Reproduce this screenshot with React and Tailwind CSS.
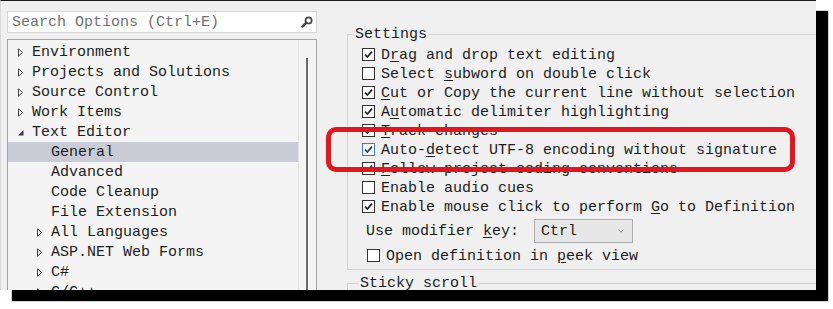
import clsx from "clsx"

const tree = [
  { label: "Environment", level: 0, arrow: "closed" },
  { label: "Projects and Solutions", level: 0, arrow: "closed" },
  { label: "Source Control", level: 0, arrow: "closed" },
  { label: "Work Items", level: 0, arrow: "closed" },
  { label: "Text Editor", level: 0, arrow: "open" },
  { label: "General", level: 1, selected: true },
  { label: "Advanced", level: 1 },
  { label: "Code Cleanup", level: 1 },
  { label: "File Extension", level: 1 },
  { label: "All Languages", level: 1, arrow: "closed" },
  { label: "ASP.NET Web Forms", level: 1, arrow: "closed" },
  { label: "C#", level: 1, arrow: "closed" },
  { label: "C/C++", level: 1, arrow: "closed" },
]

// "&" marks the access-key letter
const settings = [
  { text: "D&rag and drop text editing", checked: true },
  { text: "Select &subword on double click", checked: false },
  { text: "&Cut or Copy the current line without selection", checked: true },
  { text: "A&utomatic delimiter highlighting", checked: true },
  { text: "&Track changes", checked: true },
  { text: "Auto-&detect UTF-8 encoding without signature", checked: true, hover: true },
  { text: "&Follow project coding conventions", checked: true },
  { text: "Enable audio cues", checked: false },
  { text: "Enable mouse click to perform &Go to Definition", checked: true },
]

function Label({ text }) {
  const i = text.indexOf("&")
  if (i < 0) return <span>{text}</span>
  return (
    <span>
      {text.slice(0, i)}
      <span className="underline underline-offset-[2px] decoration-1">{text[i + 1]}</span>
      {text.slice(i + 2)}
    </span>
  )
}

function Arrow({ type }) {
  if (type === "open") {
    return (
      <svg width="6" height="7" viewBox="0 0 6 7">
        <path d="M5.5 1 L5.5 6.5 L0 6.5 Z" fill="#3c3c3c" />
      </svg>
    )
  }
  return (
    <svg width="6" height="9" viewBox="0 0 6 9">
      <path d="M0.5 0.8 L4.6 4.5 L0.5 8.2 Z" fill="none" stroke="#444" strokeWidth="1" />
    </svg>
  )
}

function Check({ checked, hover }) {
  return (
    <span
      className={clsx(
        "w-[13px] h-[13px] border bg-white flex items-center justify-center shrink-0",
        hover ? "border-[#3d7fc4]" : "border-[#333333]"
      )}
    >
      {checked && (
        <svg width="9" height="9" viewBox="0 0 9 9">
          <path
            d="M1 4.6 L3.4 7 L8 1.6"
            fill="none"
            stroke={hover ? "#1b3f74" : "#222222"}
            strokeWidth="1.7"
          />
        </svg>
      )}
    </span>
  )
}

function GroupHeader({ title, lead }) {
  return (
    <div className="flex h-[20px] items-center">
      <div className={clsx("h-[10px] self-end border-t border-l border-[#d2d2d2]", lead)} />
      <span className="px-[1px] leading-[20px] pt-[1px]">{title}</span>
      <div className="flex-1 h-[10px] self-end border-t border-r border-[#d2d2d2]" />
    </div>
  )
}

export default function App() {
  return (
    <div className="relative w-[833px] h-[309px] bg-white text-[15px] text-[#1c1c1c] font-['Liberation_Mono',monospace]">
      <div className="w-[816px] h-[290px] bg-[#f0f0f0] border-t border-t-[#1a1a1a] border-l border-l-[#d8d8d8] shadow-[12px_11px_1px_#000] overflow-hidden flex">
        {/* left: search + tree */}
        <div className="w-[310px] ml-[6px] mt-[10px] flex flex-col shrink-0">
          <div className="h-[22px] border border-[#d3d3d3] bg-white flex items-center pl-[4px] pr-[3px]">
            <span className="flex-1 text-[#707070] leading-[20px] pt-[1px]">Search Options (Ctrl+E)</span>
            <svg width="12" height="12" viewBox="0 0 12 12">
              <circle cx="7.6" cy="4.4" r="3.1" fill="none" stroke="#444" strokeWidth="1.7" />
              <path d="M5.4 6.6 L1.4 10.6" stroke="#444" strokeWidth="2.4" strokeLinecap="round" />
            </svg>
          </div>

          <div className="mt-[6px] h-[300px] border border-[#a5a5a5] bg-[#f4f4f4] flex">
            <div className="flex-1 pt-[2px]">
              {tree.map((item) => (
                <div
                  key={item.label}
                  className={clsx(
                    "h-[20px] flex items-center",
                    item.level === 0 ? "pl-[10px]" : "pl-[29px]",
                    item.selected && "bg-[#c9ccd7]"
                  )}
                >
                  <span className="w-[14px] flex items-center">
                    {item.arrow && <Arrow type={item.arrow} />}
                  </span>
                  <span className="leading-[20px] pt-[1px]">{item.label}</span>
                </div>
              ))}
            </div>
            <div className="w-[18px] border-l border-[#e1e1e1] pl-[7px] pt-[18px]">
              <div className="w-[2px] h-[260px] bg-[#6a6a6a]" />
            </div>
          </div>
        </div>

        {/* right: settings */}
        <div className="w-[480px] ml-[30px] shrink-0 flex flex-col pt-[23px]">
          <GroupHeader title="Settings" lead="w-[7px]" />
          <div className="border-l border-r border-b border-[#d2d2d2] pl-[14px] pt-[1px] pb-[4px]">
            {settings.map((s) => (
              <div key={s.text} className="h-[19px] flex items-center gap-[6px]">
                <Check checked={s.checked} hover={s.hover} />
                <span className="leading-[19px] pt-[1px]">
                  <Label text={s.text} />
                </span>
              </div>
            ))}
            <div className="mt-[3px] h-[24px] flex items-center pl-[4px] gap-[15px]">
              <span className="leading-[20px] pt-[1px]">
                <Label text="Use modifier &key:" />
              </span>
              <div className="w-[99px] h-[24px] border border-[#adadad] bg-[#e7e7e7] flex items-center pl-[6px] pr-[8px]">
                <span className="flex-1 leading-[20px] pt-[1px]">Ctrl</span>
                <svg width="6" height="4" viewBox="0 0 6 4">
                  <path d="M0.5 0.5 L3 3.2 L5.5 0.5" fill="none" stroke="#8a8a8a" strokeWidth="1" />
                </svg>
              </div>
            </div>
            <div className="mt-[3px] h-[19px] flex items-center gap-[6px] pl-[5px]">
              <Check checked={false} />
              <span className="leading-[19px] pt-[1px]">
                <Label text="Open definition in &peek view" />
              </span>
            </div>
          </div>

          <div className="mt-[3px]">
            <GroupHeader title="Sticky scroll" lead="w-[12px]" />
          </div>
        </div>
      </div>

      {/* red annotation */}
      <div className="absolute left-[326px] top-[127px] w-[469px] h-[45px] border-[5px] border-[#e2161c] rounded-[10px]" />
    </div>
  )
}
